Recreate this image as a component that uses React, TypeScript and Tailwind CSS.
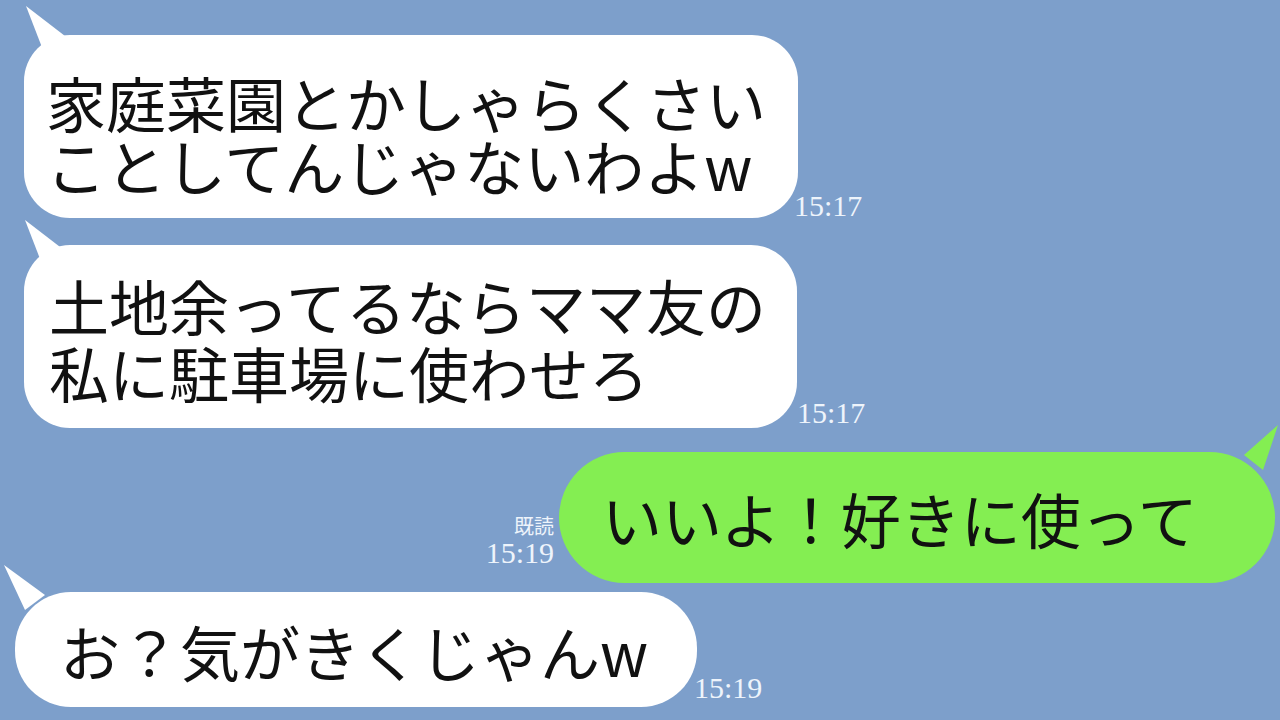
import React from 'react';

type TailProps = { className: string; points: string; fill: string };

function Tail({ className, points, fill }: TailProps) {
    return (
        <svg className={`absolute pointer-events-none ${className}`} width="60" height="60" viewBox="0 0 60 60">
            <polygon points={points} fill={fill} />
        </svg>
    );
}

function Time({ children }: { children: React.ReactNode }) {
    return (
        <span className="font-['Liberation_Serif',serif] text-[30px] leading-[30px] text-[#eef4fb] whitespace-nowrap">
            {children}
        </span>
    );
}

export default function App() {
    return (
        <div className="w-[1280px] h-[720px] overflow-hidden bg-[#7d9fcb] flex flex-col font-['Noto_Sans_CJK_JP','Noto_Sans',sans-serif] text-[#111]">
            {/* 1 */}
            <div className="mt-[35px] ml-[24px] flex items-end">
                <div className="relative w-[774px] h-[183px] rounded-[46px] bg-white pt-[35px] pl-[22px] text-[60px] leading-[63px] whitespace-nowrap">
                    <Tail className="left-[-10px] top-[-41px]" points="12,12 29,56 51,42" fill="#ffffff" />
                    <div>家庭菜園とかしゃらくさい</div>
                    <div>ことしてんじゃないわよw</div>
                </div>
                <div className="ml-[-4px] mb-[-3px]">
                    <Time>15:17</Time>
                </div>
            </div>

            {/* 2 */}
            <div className="mt-[27px] ml-[24px] flex items-end">
                <div className="relative w-[773px] h-[183px] rounded-[46px] bg-white pt-[26px] pl-[25px] text-[60px] leading-[67px] whitespace-nowrap">
                    <Tail className="left-[-10px] top-[-37px]" points="11,12 28,56 50,42" fill="#ffffff" />
                    <div>土地余ってるならママ友の</div>
                    <div>私に駐車場に使わせろ</div>
                </div>
                <div className="ml-0 mb-0">
                    <Time>15:17</Time>
                </div>
            </div>

            {/* 3 */}
            <div className="mt-[24px] mr-[5px] flex items-end justify-end">
                <div className="flex flex-col items-end mr-[5px] mb-[15px]">
                    <span className="text-[20px] leading-[24px] text-[#eef4fb]">既読</span>
                    <Time>15:19</Time>
                </div>
                <div className="relative w-[716px] h-[131px] rounded-full bg-[#84ee52] flex items-center pl-[43px] text-[60px] leading-[60px] whitespace-nowrap">
                    <Tail className="right-[-9px] top-[-39px]" points="54,12 20,42 39,57" fill="#84ee52" />
                    <span>いいよ！好きに使って</span>
                </div>
            </div>

            {/* 4 */}
            <div className="mt-[9px] ml-[15px] flex items-end">
                <div className="relative w-[682px] h-[115px] rounded-[56px] bg-white flex items-center pl-[45px] pt-[2px] text-[60px] leading-[60px] whitespace-nowrap">
                    <Tail className="left-[-23px] top-[-39px]" points="12,12 33,57 53,42" fill="#ffffff" />
                    <span>お？気がきくじゃんw</span>
                </div>
                <div className="ml-[-3px] mb-[4px]">
                    <Time>15:19</Time>
                </div>
            </div>
        </div>
    );
}
